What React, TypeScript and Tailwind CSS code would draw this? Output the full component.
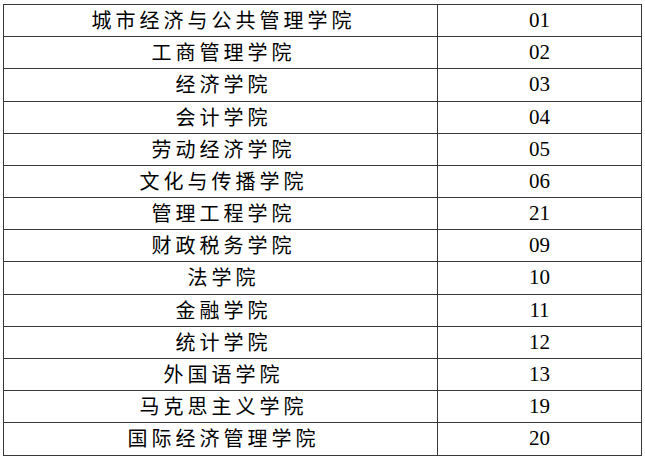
import React from "react";

const rows: [string, string, string][] = [
  ["城市经济与公共管理学院", "01", "h-[32px]"],
  ["工商管理学院", "02", "h-[32px]"],
  ["经济学院", "03", "h-[33px]"],
  ["会计学院", "04", "h-[32px]"],
  ["劳动经济学院", "05", "h-[32px]"],
  ["文化与传播学院", "06", "h-[32px]"],
  ["管理工程学院", "21", "h-[32px]"],
  ["财政税务学院", "09", "h-[32px]"],
  ["法学院", "10", "h-[33px]"],
  ["金融学院", "11", "h-[32px]"],
  ["统计学院", "12", "h-[32px]"],
  ["外国语学院", "13", "h-[32px]"],
  ["马克思主义学院", "19", "h-[32px]"],
  ["国际经济管理学院", "20", "h-[33px]"],
];

export default function App() {
  return (
    <div className="w-[645px] h-[460px] bg-white pt-[4px] pl-[3px]">
      <div className="w-[639px] border-t border-l border-[#383838]">
        {rows.map(([name, code, h]) => (
          <div key={code} className={`flex border-b border-[#383838] ${h}`}>
            <div className="w-[434px] border-r border-[#383838] flex items-center justify-center text-[20px] tracking-[4px] pl-[6px] text-black font-['Liberation_Serif','Noto_Sans_CJK_SC',serif]">
              {name}
            </div>
            <div className="w-[204px] border-r border-[#383838] flex items-center justify-center text-[21px] text-black font-['Liberation_Serif',serif]">
              {code}
            </div>
          </div>
        ))}
      </div>
    </div>
  );
}
